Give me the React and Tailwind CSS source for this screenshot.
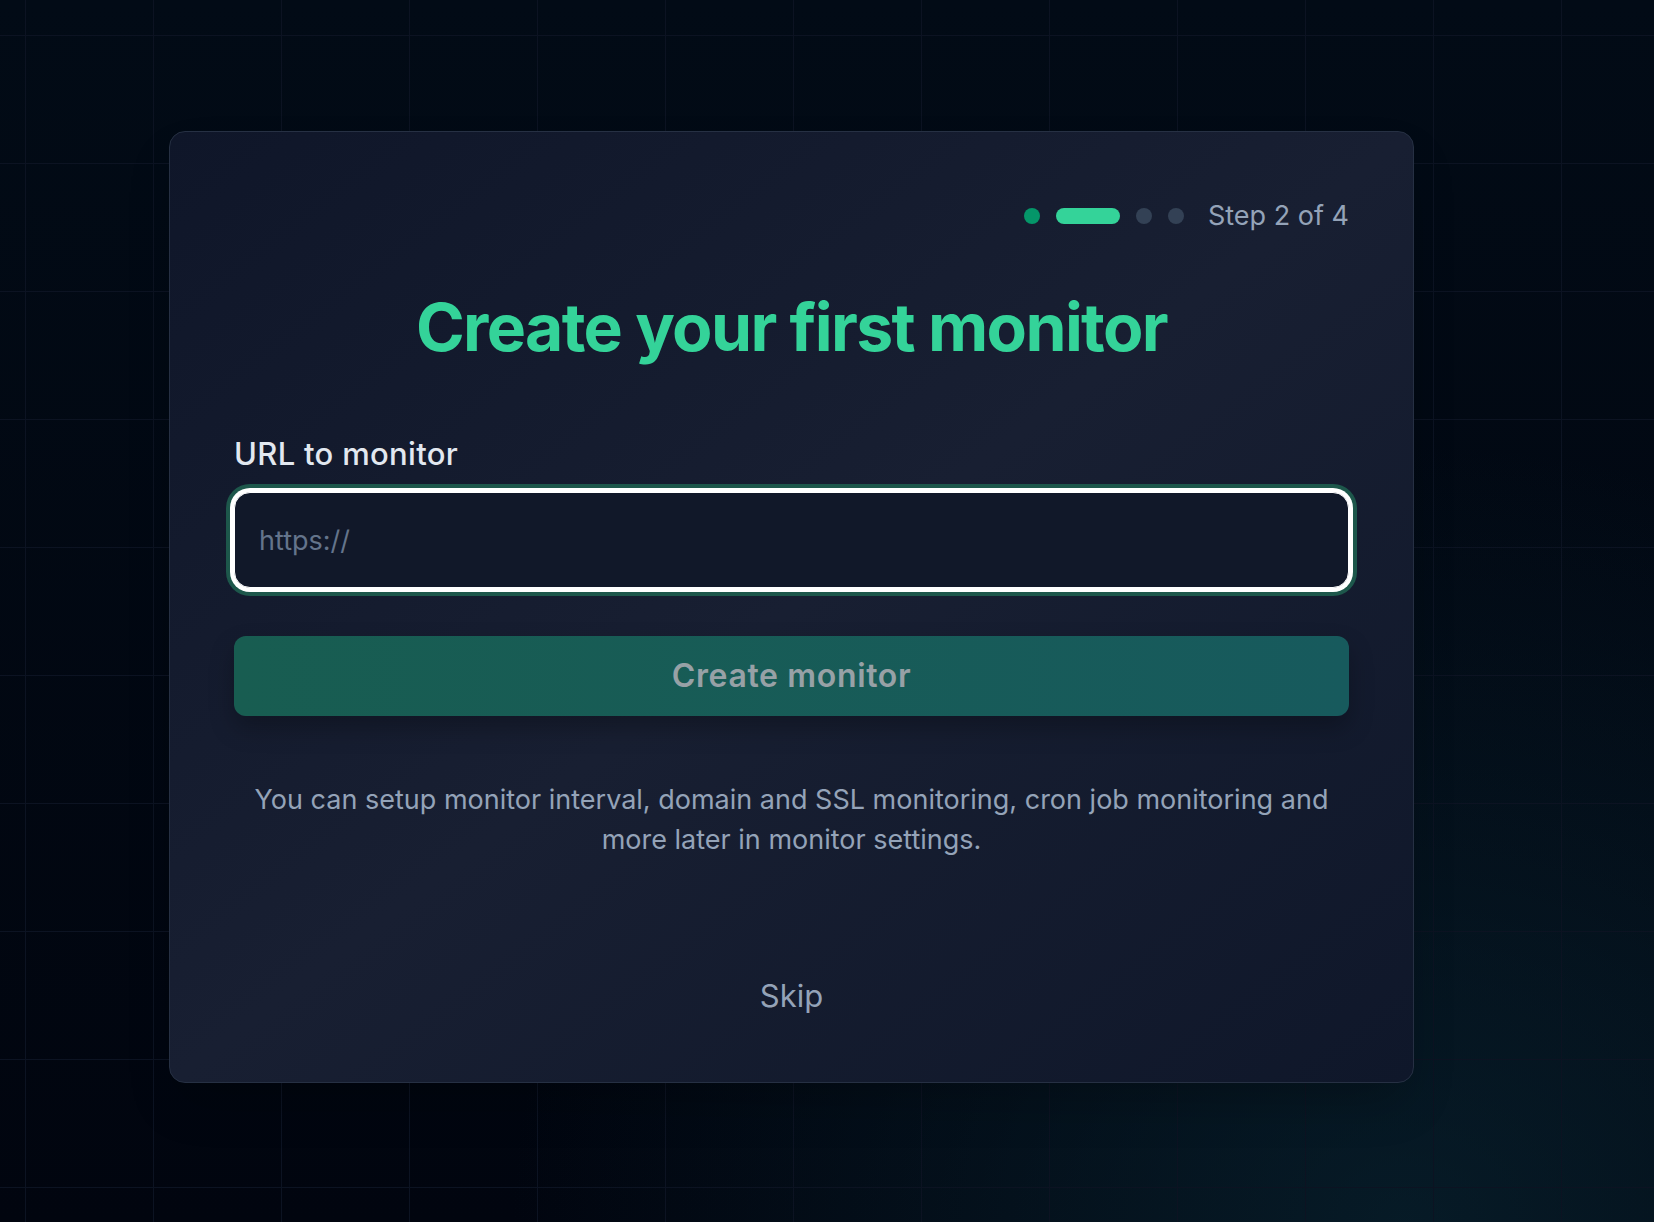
export default function App() {
  const steps = [
    { state: 'done' },
    { state: 'current' },
    { state: 'todo' },
    { state: 'todo' },
  ];

  return (
    <div
      className="min-h-[1222px] w-full overflow-hidden bg-[#020712] pt-[131px] pl-[169px] [background-image:linear-gradient(to_right,#0c1322_1px,transparent_1px),linear-gradient(to_bottom,#0c1322_1px,transparent_1px),radial-gradient(ellipse_at_85%_100%,rgba(12,48,62,0.5),transparent_45%),linear-gradient(to_bottom,#020b16,#01050f)] [background-size:128px_128px,128px_128px,100%_100%,100%_100%] [background-position:25px_35px,25px_35px,0_0,0_0]"
      style={{ fontFamily: 'Inter, "Noto Sans", sans-serif' }}
    >
      <div className="w-[1245px] rounded-2xl border border-[#263043] bg-gradient-to-br from-[#0f1629] via-[#181f32] to-[#0f172a] p-16 shadow-2xl">
        {/* progress */}
        <div className="flex h-10 items-center justify-end">
          <div className="flex items-center gap-4">
            {steps.map((s, i) => (
              <span
                key={i}
                className={
                  s.state === 'done'
                    ? 'h-4 w-4 rounded-full bg-[#059669]'
                    : s.state === 'current'
                    ? 'h-4 w-16 rounded-full bg-[#34d399]'
                    : 'h-4 w-4 rounded-full bg-[#334155]'
                }
              />
            ))}
          </div>
          <span className="ml-6 text-[27px] text-[#94a3b8]">Step 2 of 4</span>
        </div>

        <h1 className="mt-[57px] text-center text-[66px] leading-[68px] font-bold tracking-tight text-[#34d399]">
          Create your first monitor
        </h1>

        <label className="mt-[75px] block text-[31px] leading-9 font-medium tracking-[0.01em] text-[#e2e8f0]">
          URL to monitor
        </label>
        <input
          type="text"
          placeholder="https://"
          className="mt-5 block h-24 w-full rounded-2xl border border-white bg-[#111829] px-6 text-[27px] text-[#e2e8f0] placeholder:text-[#64748b] shadow-[0_0_0_4px_#ffffff,0_0_0_8px_#1d574b] outline-none"
        />

        <button className="mt-12 flex h-20 w-full items-center justify-center rounded-xl bg-gradient-to-r from-[#185d51] to-[#175a5d] text-[32px] font-semibold tracking-[0.02em] text-[#97a1a6] shadow-[0_12px_24px_rgba(0,0,0,0.25)]">
          Create monitor
        </button>

        <p className="mx-auto mt-16 max-w-[1100px] text-center text-[27px] leading-10 text-[#94a3b8]">
          You can setup monitor interval, domain and SSL monitoring, cron job monitoring and more later in monitor settings.
        </p>

        <div className="mt-[113px] flex justify-center">
          <button className="text-[31px] leading-[45px] text-[#94a3b8]">Skip</button>
        </div>
      </div>
    </div>
  );
}
